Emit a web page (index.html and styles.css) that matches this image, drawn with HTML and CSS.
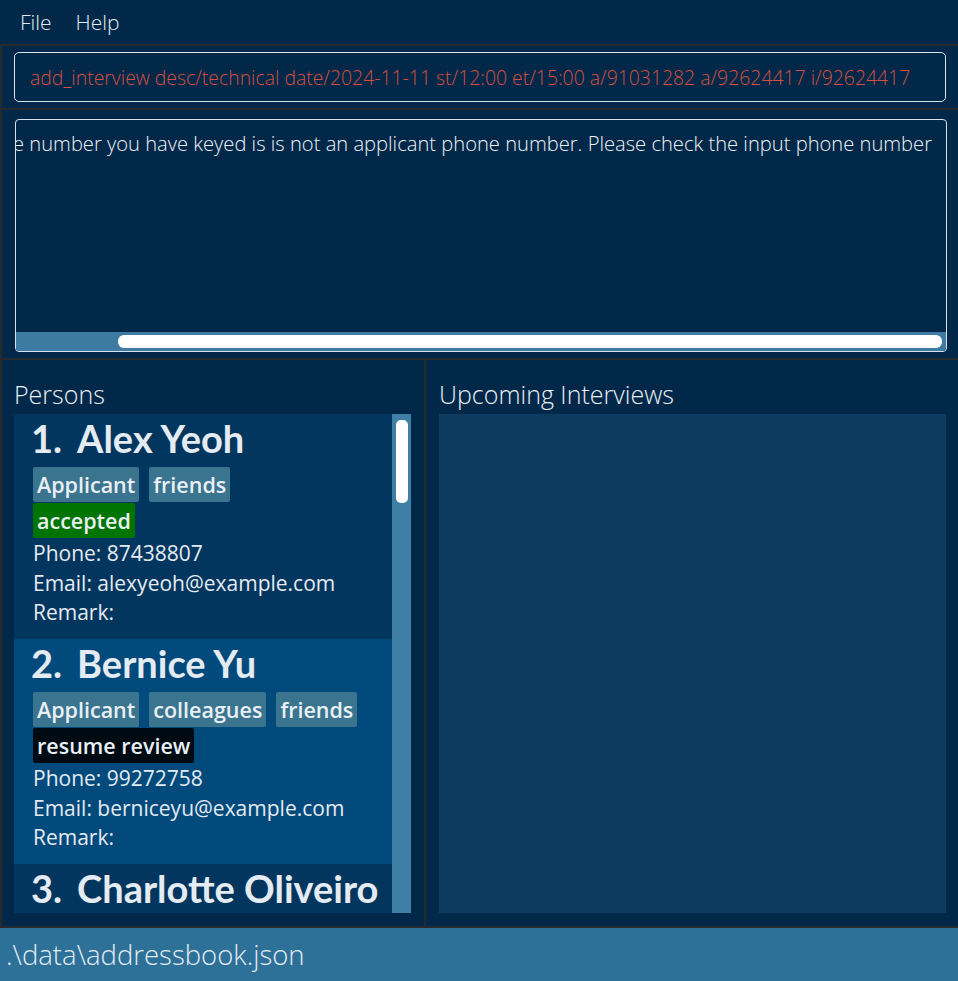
FILE: index.html
```html
<!DOCTYPE html>
<html>
<head>
<meta charset="utf-8">
<link rel="stylesheet" href="styles.css">
</head>
<body>
<div class="app">
  <div class="menubar">
    <span class="menu-item">File</span>
    <span class="menu-item">Help</span>
  </div>
  <div class="command-section">
    <div class="command-box">add_interview desc/technical date/2024-11-11 st/12:00 et/15:00 a/91031282 a/92624417 i/92624417</div>
  </div>
  <div class="result-section">
    <div class="result-box">
      <div class="result-view">
        <div class="result-text">The phone number you have keyed is is not an applicant phone number. Please check the input phone number</div>
      </div>
      <div class="hscroll"><div class="hthumb"></div></div>
    </div>
  </div>
  <div class="lower">
    <div class="panel left-panel">
      <div class="panel-title">Persons</div>
      <div class="list">
        <div class="cards">
          <div class="card">
            <div class="name"><span class="idx">1.</span>Alex Yeoh</div>
            <div class="tags"><span class="tag">Applicant</span><span class="tag">friends</span></div>
            <div class="tags"><span class="tag status-accepted">accepted</span></div>
            <div class="field">Phone: 87438807</div>
            <div class="field">Email: alexyeoh@example.com</div>
            <div class="field">Remark:</div>
          </div>
          <div class="card card-alt">
            <div class="name"><span class="idx">2.</span>Bernice Yu</div>
            <div class="tags"><span class="tag">Applicant</span><span class="tag">colleagues</span><span class="tag">friends</span></div>
            <div class="tags"><span class="tag status-review">resume review</span></div>
            <div class="field">Phone: 99272758</div>
            <div class="field">Email: berniceyu@example.com</div>
            <div class="field">Remark:</div>
          </div>
          <div class="card">
            <div class="name"><span class="idx">3.</span>Charlotte Oliveiro</div>
          </div>
        </div>
        <div class="vscroll"><div class="vthumb"></div></div>
      </div>
    </div>
    <div class="panel right-panel">
      <div class="panel-title">Upcoming Interviews</div>
      <div class="interviews"></div>
    </div>
  </div>
  <div class="statusbar">.\data\addressbook.json</div>
</div>
</body>
</html>
```
FILE: styles.css
```css
html, body {
  margin: 0;
  padding: 0;
  background: #012849;
}
body {
  font-family: "Open Sans", "Noto Sans", sans-serif;
  color: #e6eef5;
}
.app {
  width: 958px;
  height: 981px;
  display: flex;
  flex-direction: column;
  overflow: hidden;
}
.menubar {
  flex-shrink: 0;
  height: 44px;
  display: flex;
  align-items: center;
  gap: 24px;
  padding-left: 20px;
  font-size: 21px;
  font-weight: 300;
  color: #e4ecf2;
  border-bottom: 2px solid #262a2d;
}
.command-section {
  flex-shrink: 0;
  padding: 6px 12px 6px 12px;
  border-bottom: 2px solid #262a2d;
  border-left: 2px solid #262a2d;
}
.command-box {
  height: 48px;
  border: 1px solid #d9e2ea;
  border-radius: 5px;
  display: flex;
  align-items: center;
  padding-left: 15px;
  font-size: 19.4px;
  font-weight: 300;
  color: #d4503f;
  white-space: nowrap;
  overflow: hidden;
}
.result-section {
  flex-shrink: 0;
  padding: 9px 11px 6px 13px;
  border-bottom: 2px solid #262a2d;
  border-left: 2px solid #262a2d;
}
.result-box {
  height: 231px;
  border: 1px solid #d9e2ea;
  border-radius: 4px;
  display: flex;
  flex-direction: column;
  overflow: hidden;
}
.result-view {
  flex: 1;
  overflow: hidden;
  display: flex;
  justify-content: flex-end;
  align-items: flex-start;
  padding-right: 14px;
}
.result-text {
  flex-shrink: 0;
  margin-top: 9px;
  white-space: nowrap;
  font-size: 20.15px;
  font-weight: 300;
  color: #eef3f7;
}
.hscroll {
  flex-shrink: 0;
  height: 19px;
  background: #3e7ba3;
  display: flex;
  align-items: center;
  padding-left: 102px;
  padding-right: 4px;
}
.hthumb {
  flex: 1;
  height: 13px;
  background: #ffffff;
  border-radius: 6px;
}
.lower {
  flex: 1;
  min-height: 0;
  display: flex;
  border-bottom: 2px solid #262a2d;
}
.panel {
  display: flex;
  flex-direction: column;
  padding-bottom: 13px;
  min-height: 0;
}
.left-panel {
  width: 397px;
  padding-left: 12px;
  padding-right: 13px;
  border-left: 2px solid #262a2d;
  border-right: 2px solid #262a2d;
}
.right-panel {
  flex: 1;
  padding-left: 13px;
  padding-right: 12px;
}
.panel-title {
  flex-shrink: 0;
  height: 54px;
  line-height: 34px;
  padding-top: 17px;
  box-sizing: border-box;
  font-size: 25px;
  font-weight: 300;
  color: #e8eff5;
  white-space: nowrap;
}
.list {
  flex: 1;
  min-height: 0;
  display: flex;
  overflow: hidden;
}
.cards {
  flex: 1;
  display: flex;
  flex-direction: column;
  overflow: hidden;
  background: #03365e;
}
.card {
  padding: 2px 0 0 19px;
  background: #03365e;
  height: 225px;
  box-sizing: border-box;
  flex-shrink: 0;
}
.card-alt {
  background: #024a7b;
}
.name {
  font-family: "Lato", "Open Sans", sans-serif;
  font-size: 38px;
  font-weight: 700;
  color: #e4ebf2;
  line-height: 44px;
  margin-bottom: 7px;
  margin-left: -2px;
  white-space: nowrap;
}
.idx {
  margin-right: 15px;
}
.tags {
  display: flex;
  gap: 10px;
  margin-bottom: 1px;
}
.tag {
  background: #3b748f;
  color: #e9f0f5;
  font-size: 21.5px;
  font-weight: 600;
  height: 35px;
  line-height: 35px;
  padding: 0 4px;
  border-radius: 2px;
  white-space: nowrap;
}
.status-accepted {
  background: #007400;
}
.status-review {
  background: #000a13;
}
.field {
  font-size: 21px;
  color: #e4ebf2;
  line-height: 29.5px;
  white-space: nowrap;
}
.vscroll {
  flex-shrink: 0;
  width: 19px;
  background: #3f7ea5;
  padding-top: 6px;
  box-sizing: border-box;
  display: flex;
  justify-content: center;
}
.vthumb {
  width: 12px;
  height: 83px;
  background: #ffffff;
  border-radius: 5px;
}
.interviews {
  flex: 1;
  background: #0d3a5f;
}
.statusbar {
  flex-shrink: 0;
  height: 53px;
  background: #2d7098;
  display: flex;
  align-items: center;
  padding-left: 6px;
  font-size: 27.5px;
  font-weight: 300;
  color: #e4ecf2;
  white-space: nowrap;
}
```
